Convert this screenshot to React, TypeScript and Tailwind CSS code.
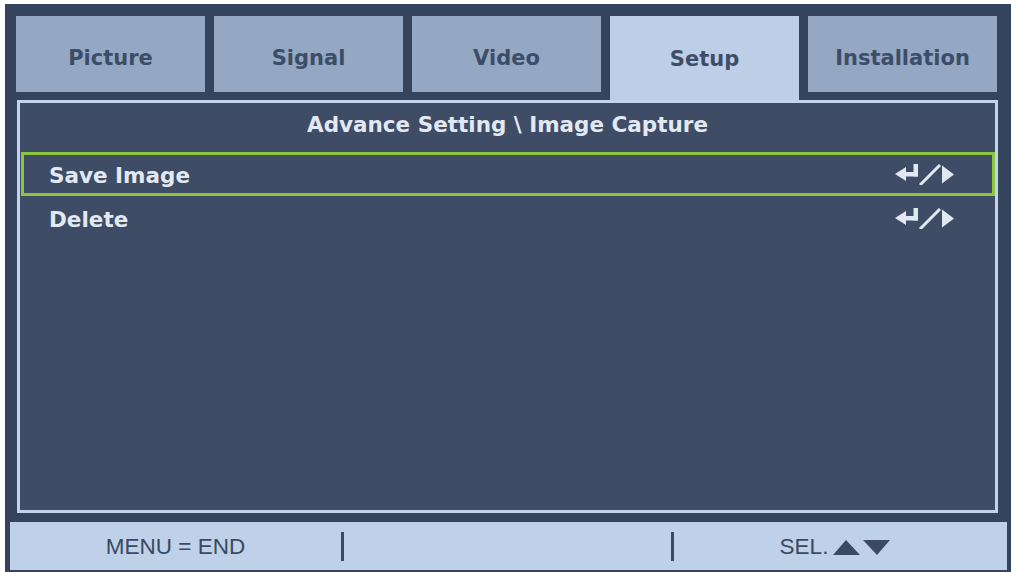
import React from "react";

const tabs = ["Picture", "Signal", "Video", "Setup", "Installation"];
const active = "Setup";

const rows = [
  { label: "Save Image", selected: true },
  { label: "Delete", selected: false },
];

function EnterOrRight() {
  return (
    <svg width="60" height="21" viewBox="0 0 60 21" fill="#e1e8f2">
      <polygon points="0,10 11,3 11,17" />
      <rect x="10" y="8" width="13" height="4.5" />
      <rect x="18.5" y="0" width="4.5" height="12.5" />
      <line x1="25" y1="21" x2="45" y2="1" stroke="#e1e8f2" strokeWidth="3" />
      <polygon points="47,1.5 59,10.5 47,19.5" />
    </svg>
  );
}

function UpDown() {
  return (
    <svg width="58" height="17" viewBox="0 0 58 17" fill="#3b4961">
      <polygon points="0,16 13,1 27,16" />
      <polygon points="30,1 57,1 44,16" />
    </svg>
  );
}

export default function App() {
  return (
    <div className="w-[1018px] h-[573px] bg-white pt-[4px] pl-[5px] overflow-hidden">
      <div className="w-[1006px] h-[568px] bg-[#35445d] flex flex-col font-['DejaVu_Sans',sans-serif]">
        {/* tabs */}
        <div className="mt-[12px] ml-[11px] flex items-start gap-[9px] h-[84px]">
          {tabs.map((tab) => (
            <div
              key={tab}
              className={
                tab === active
                  ? "w-[189px] h-[84px] bg-[#bccfe7] flex justify-center pt-[33px] text-[21px] font-bold text-[#3e4d67]"
                  : "w-[189px] h-[76px] bg-[#94a8c4] flex justify-center pt-[32px] text-[21px] font-bold text-[#3e4d67]"
              }
            >
              <span className="leading-none">{tab}</span>
            </div>
          ))}
        </div>

        {/* content box */}
        <div className="ml-[12px] w-[981px] h-[413px] border-[3px] border-[#c3d4ea] bg-[#3e4c66] flex flex-col">
          <div className="h-[49px] flex items-center justify-center pb-[5px] text-[21.5px] font-bold text-[#e3e9f2]">
            Advance Setting \ Image Capture
          </div>
          {rows.map((row) => (
            <div
              key={row.label}
              className={
                row.selected
                  ? "ml-[1px] h-[44px] border-[3px] border-[#8cc641] flex items-center justify-between pl-[25px] pr-[37px]"
                  : "ml-[1px] h-[44px] border-[3px] border-transparent flex items-center justify-between pl-[25px] pr-[37px]"
              }
            >
              <span className="text-[21.5px] font-bold text-[#e3e9f2] leading-none pt-[3px]">{row.label}</span>
              <EnterOrRight />
            </div>
          ))}
        </div>

        {/* bottom bar */}
        <div className="mt-[9px] ml-[5px] w-[997px] h-[48px] bg-[#bed1e9] flex items-center font-['Liberation_Sans',Arial,sans-serif] text-[22.5px] text-[#3b4961]">
          <div className="w-[331px] flex justify-center pt-[2px]">MENU = END</div>
          <div className="w-[3px] h-[29px] bg-[#3b4961]" />
          <div className="w-[327px]" />
          <div className="w-[3px] h-[29px] bg-[#3b4961]" />
          <div className="flex-1 flex justify-center items-center gap-[5px] pr-[10px] pt-[2px]">
            <span>SEL.</span>
            <UpDown />
          </div>
        </div>
      </div>
    </div>
  );
}
